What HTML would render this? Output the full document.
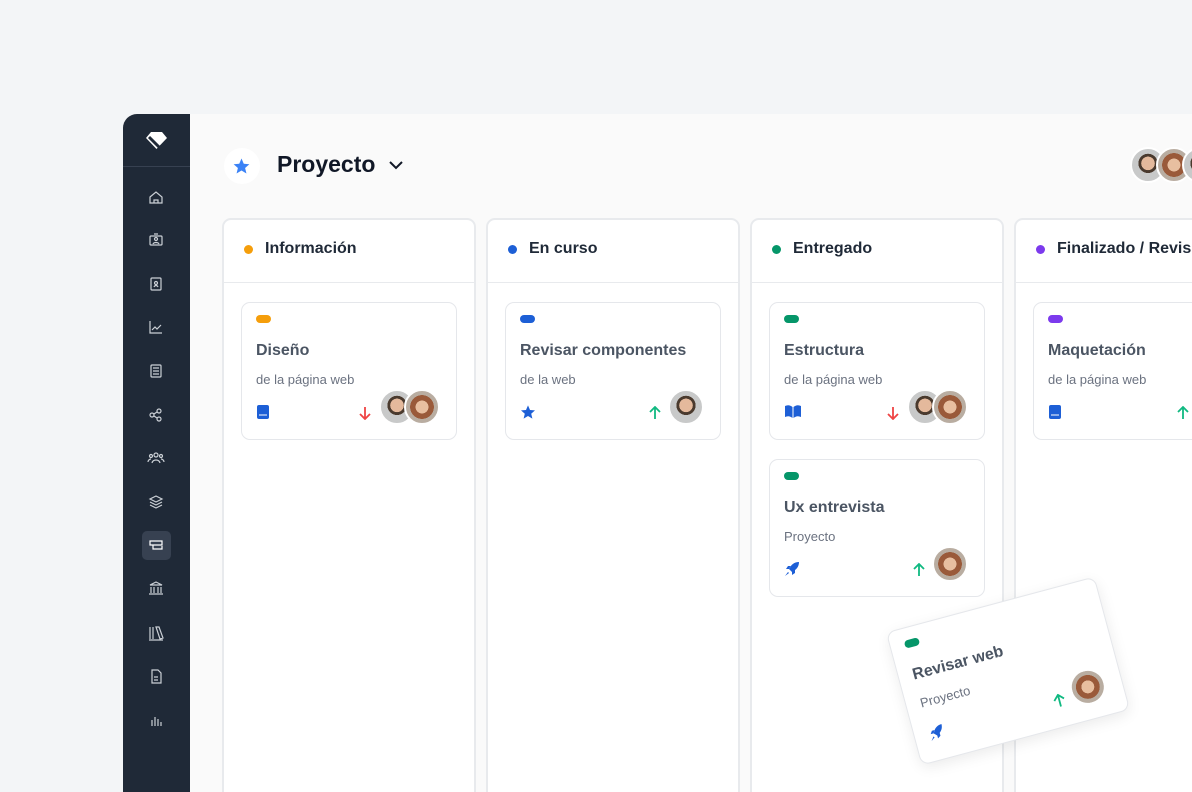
<!DOCTYPE html>
<html style="width:1192px;height:792px;overflow:hidden"><head><meta charset="utf-8"><style>
*{box-sizing:border-box;margin:0;padding:0}
body{width:1192px;height:792px;overflow:hidden;background:#f3f5f7;font-family:"Liberation Sans",sans-serif;position:relative}
.panel{position:absolute;left:123px;top:114px;width:1069px;height:678px;background:#fafafa;border-radius:14px 0 0 0;overflow:hidden}
.side{position:absolute;left:0;top:0;width:67px;height:100%;background:#1f2937}
.side .div{position:absolute;left:0;top:52px;width:67px;height:1px;background:#374151}
.act{position:absolute;left:19px;top:417px;width:29px;height:29px;background:#374151;border-radius:5px}
.col{position:absolute;top:218px;width:254px;height:600px;background:#fff;border:2px solid #e8eaed;border-radius:9px}
.col .hd{height:63px;border-bottom:1.5px solid #e8eaed;display:flex;align-items:center;padding-left:20px;padding-bottom:4px;font-size:16px;font-weight:bold;color:#1f2937}
.dot{width:9px;height:9px;border-radius:50%;margin-right:12px}
.card{position:absolute;width:216px;height:138px;background:#fff;border:1.5px solid #e5e7eb;border-radius:9px}
.pill{position:absolute;left:14px;top:12px;width:15px;height:8px;border-radius:4px}
.t{position:absolute;left:14px;top:39px;font-size:16px;font-weight:bold;color:#4b5563}
.s{position:absolute;left:14px;top:69px;font-size:13px;color:#6b7280}
.bi{position:absolute;left:14px;top:101px}
.arr{position:absolute;top:103px}
.av{position:absolute;width:36px;height:36px;border-radius:50%;border:2px solid #fff;top:86px}
.m{background:radial-gradient(circle at 50% 45%,#e4b99c 0 28%,#4a3a2e 29% 40%,#c8c9c9 41%)}
.f{background:radial-gradient(circle at 50% 50%,#e8bfa0 0 28%,#9a5a3a 29% 52%,#b9ada1 53%)}
</style></head><body>
<div class="panel">
 <div class="side">
  <svg style="position:absolute;left:23px;top:17px" width="21" height="19" viewBox="0 0 21 19"><path d="M5 1h11l5 6-10.5 11L0 7z" fill="#fff"/><path d="M3 6l10 10" stroke="#1f2937" stroke-width="3"/></svg>
  <div class="div"></div>
  <div class="act"></div>
  <svg width="67" height="700" style="position:absolute;left:0;top:0" fill="none" stroke="#cbd0d6" stroke-width="1.2">
   <path d="M27 83l6-5 6 5v6h-12z M31 89v-3h4v3"/>
   <rect x="27" y="122" width="12" height="9" rx="1"/><circle cx="33" cy="125" r="1.5"/><path d="M30 130c1-2 5-2 6 0M31 120h4"/>
   <rect x="28" y="164" width="10" height="12" rx="1"/><circle cx="33" cy="169" r="1.5"/><path d="M31 173c1-2 3-2 4 0"/>
   <path d="M27 207v12h12 M29 216l3-3 2 2 4-4"/>
   <rect x="28" y="251" width="10" height="12" rx="1"/><path d="M30 254h6M30 257h6M30 260h6"/>
   <circle cx="29" cy="301" r="2"/><circle cx="36" cy="297" r="2"/><circle cx="36" cy="305" r="2"/><path d="M31 300l3-2M31 302l3 2"/>
   <circle cx="33" cy="341" r="2"/><circle cx="28" cy="342" r="1.5"/><circle cx="38" cy="342" r="1.5"/><path d="M29 349c1-4 7-4 8 0M25 348c0-2 2-3 3-3M41 348c0-2-2-3-3-3"/>
   <path d="M33 382l6 3-6 3-6-3z M27 388l6 3 6-3 M27 391l6 3 6-3"/>
   <path d="M27 427h12v4h-12z M30 431v4h9v-3" stroke="#fff"/>
   <path d="M27 471l6-3 6 3z M28 473v6M31 473v6M35 473v6M38 473v6M26 480h14"/>
   <path d="M27 513v12M30 513v12M33 513l4 12 3-1-4-11z M26 526h14"/>
   <path d="M29 556h6l3 3v10h-9z M31 563h4M31 566h4"/>
   <path d="M29 612v-6M32 612v-9M35 612v-7M38 612v-4"/>
  </svg>
 </div>
 <div style="position:absolute;left:101px;top:34px;width:36px;height:36px;border-radius:50%;background:#fff"></div>
 <svg style="position:absolute;left:109px;top:43px" width="19" height="18" viewBox="0 0 24 24"><path d="M12 2l3 7 7.5.6-5.7 5 1.8 7.4L12 18l-6.6 4 1.8-7.4-5.7-5L9 9z" fill="#3b82f6"/></svg>
 <div style="position:absolute;left:154px;top:37px;font-size:23px;font-weight:bold;color:#111827">Proyecto</div>
 <svg style="position:absolute;left:265px;top:46px" width="16" height="10"><path d="M2 2l6 6 6-6" stroke="#111827" stroke-width="2" fill="none"/></svg>
 <div class="av m" style="left:1007px;top:33px"></div>
 <div class="av f" style="left:1033px;top:33px"></div>
 <div class="av m" style="left:1059px;top:33px"></div>
</div>

<div class="col" style="left:222px"><div class="hd"><span class="dot" style="background:#f59e0b"></span>Información</div></div>
<div class="col" style="left:486px"><div class="hd"><span class="dot" style="background:#1d5fd6"></span>En curso</div></div>
<div class="col" style="left:750px"><div class="hd"><span class="dot" style="background:#059669"></span>Entregado</div></div>
<div class="col" style="left:1014px"><div class="hd" style="white-space:nowrap"><span class="dot" style="background:#7c3aed"></span>Finalizado / Revisión</div></div>

<div class="card" style="left:241px;top:302px"><div class="pill" style="background:#f59e0b"></div><div class="t">Diseño</div><div class="s">de la página web</div>
 <svg class="bi" width="14" height="16"><rect x="1" y="1" width="12" height="14" rx="2" fill="#1d5fd6"/><path d="M3 11h8" stroke="#fff"/></svg>
 <svg class="arr" style="left:117px" width="12" height="14"><path d="M6 1v12M1 8l5 5 5-5" stroke="#ef4444" stroke-width="1.8" fill="none"/></svg>
 <div class="av m" style="left:137px"></div><div class="av f" style="left:162px"></div></div>
<div class="card" style="left:505px;top:302px"><div class="pill" style="background:#1d5fd6"></div><div class="t">Revisar componentes</div><div class="s">de la web</div>
 <svg class="bi" width="16" height="16" viewBox="0 0 24 24"><path d="M12 2l3 7 7.5.6-5.7 5 1.8 7.4L12 18l-6.6 4 1.8-7.4-5.7-5L9 9z" fill="#1d5fd6"/></svg>
 <svg class="arr" style="left:143px" width="12" height="14"><path d="M6 13V1M1 6l5-5 5 5" stroke="#10b981" stroke-width="1.8" fill="none"/></svg>
 <div class="av m" style="left:162px"></div></div>
<div class="card" style="left:769px;top:302px"><div class="pill" style="background:#059669"></div><div class="t">Estructura</div><div class="s">de la página web</div>
 <svg class="bi" width="18" height="15"><path d="M1 2q4-2 7.5 1v11q-3.5-3-7.5-1z M17 2q-4-2-7.5 1v11q3.5-3 7.5-1z" fill="#1d5fd6"/></svg>
 <svg class="arr" style="left:117px" width="12" height="14"><path d="M6 1v12M1 8l5 5 5-5" stroke="#ef4444" stroke-width="1.8" fill="none"/></svg>
 <div class="av m" style="left:137px"></div><div class="av f" style="left:162px"></div></div>
<div class="card" style="left:769px;top:459px"><div class="pill" style="background:#059669"></div><div class="t">Ux entrevista</div><div class="s">Proyecto</div>
 <svg class="bi" width="16" height="16" viewBox="0 0 16 16"><path d="M15 1C10 1 7 4 5 8l3 3c4-2 7-5 7-10z M5 8L2 8 4 5h3z M8 11v3l3-2v-3z M4 11l-3 4 4-3z" fill="#1d5fd6"/></svg>
 <svg class="arr" style="left:143px" width="12" height="14"><path d="M6 13V1M1 6l5-5 5 5" stroke="#10b981" stroke-width="1.8" fill="none"/></svg>
 <div class="av f" style="left:162px"></div></div>
<div class="card" style="left:1033px;top:302px"><div class="pill" style="background:#7c3aed"></div><div class="t">Maquetación</div><div class="s">de la página web</div>
 <svg class="bi" width="14" height="16"><rect x="1" y="1" width="12" height="14" rx="2" fill="#1d5fd6"/><path d="M3 11h8" stroke="#fff"/></svg>
 <svg class="arr" style="left:143px" width="12" height="14"><path d="M6 13V1M1 6l5-5 5 5" stroke="#10b981" stroke-width="1.8" fill="none"/></svg></div>

<div class="card" style="left:900px;top:602px;transform:rotate(-15deg);box-shadow:0 4px 14px rgba(0,0,0,.08)"><div class="pill" style="background:#059669"></div><div class="t">Revisar web</div><div class="s">Proyecto</div>
 <svg class="bi" width="16" height="16" viewBox="0 0 16 16"><path d="M15 1C10 1 7 4 5 8l3 3c4-2 7-5 7-10z M5 8L2 8 4 5h3z M8 11v3l3-2v-3z M4 11l-3 4 4-3z" fill="#1d5fd6"/></svg>
 <svg class="arr" style="left:143px" width="12" height="14"><path d="M6 13V1M1 6l5-5 5 5" stroke="#10b981" stroke-width="1.8" fill="none"/></svg>
 <div class="av f" style="left:162px"></div></div>
</body></html>
